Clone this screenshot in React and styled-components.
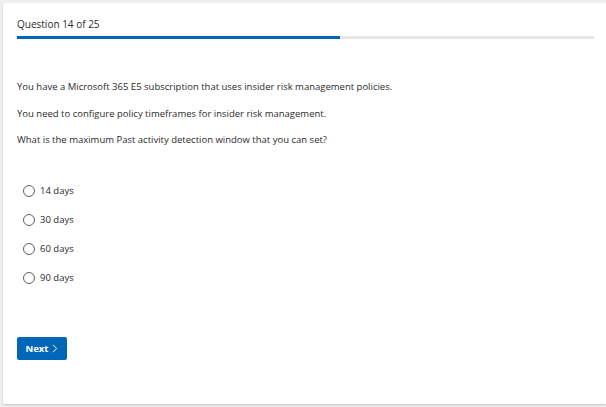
import React from "react";
import styled, { createGlobalStyle } from "styled-components";

const GlobalStyle = createGlobalStyle`
  html, body {
    margin: 0;
    padding: 0;
    background: #f0f0f0;
  }
  body {
    font-family: "Open Sans", "Noto Sans", sans-serif;
    color: #2b2b2b;
  }
`;

const Page = styled.div`
  padding: 3px 0 3px 3px;
  height: 407px;
  box-sizing: border-box;
`;

const Card = styled.div`
  background: #fff;
  height: 401px;
  box-sizing: border-box;
  padding: 14px 12px 0 14px;
  box-shadow: 0 1px 2px rgba(0, 0, 0, 0.18);
  display: flex;
  flex-direction: column;
`;

const Counter = styled.div`
  font-size: 10px;
  line-height: 14px;
  height: 14px;
`;

const Track = styled.div`
  margin-top: 5px;
  height: 3px;
  background: #e6e6e6;
`;

const Fill = styled.div`
  height: 100%;
  background: #0067b8;
`;

const Question = styled.div`
  margin-top: 41px;
  display: flex;
  flex-direction: column;
  gap: 12.5px;
`;

const Para = styled.p`
  margin: 0;
  font-size: 9.5px;
  line-height: 14px;
`;

const Options = styled.div`
  margin-top: 37px;
  padding-left: 6px;
  display: flex;
  flex-direction: column;
  gap: 15px;
`;

const Option = styled.label`
  display: flex;
  align-items: center;
  gap: 5px;
  font-size: 9.5px;
  line-height: 14px;
  cursor: pointer;
`;

const Radio = styled.span`
  width: 10px;
  height: 10px;
  border: 1px solid #605e5c;
  border-radius: 50%;
  background: #fff;
  flex-shrink: 0;
`;

const NextButton = styled.button`
  margin-top: 52px;
  align-self: flex-start;
  width: 50px;
  height: 23px;
  border: none;
  border-radius: 2px;
  background: #0067b8;
  color: #fff;
  font-family: "Open Sans", "Noto Sans", sans-serif;
  font-size: 9.5px;
  font-weight: 700;
  display: flex;
  align-items: center;
  justify-content: center;
  gap: 4px;
  padding: 0;
`;

const answers = ["14 days", "30 days", "60 days", "90 days"];

export default function App() {
  const progress = (14 / 25) * 100;
  return (
    <>
      <GlobalStyle />
      <Page>
        <Card>
          <Counter>Question 14 of 25</Counter>
          <Track>
            <Fill style={{ width: `${progress}%` }} />
          </Track>
          <Question>
            <Para>
              You have a Microsoft 365 E5 subscription that uses insider risk
              management policies.
            </Para>
            <Para>
              You need to configure policy timeframes for insider risk
              management.
            </Para>
            <Para>
              What is the maximum Past activity detection window that you can
              set?
            </Para>
          </Question>
          <Options>
            {answers.map((a) => (
              <Option key={a}>
                <Radio />
                {a}
              </Option>
            ))}
          </Options>
          <NextButton>
            Next
            <svg width="6" height="9" viewBox="0 0 6 9" fill="none">
              <path d="M1 0.8 L4.6 4.5 L1 8.2" stroke="#fff" strokeWidth="1" />
            </svg>
          </NextButton>
        </Card>
      </Page>
    </>
  );
}
